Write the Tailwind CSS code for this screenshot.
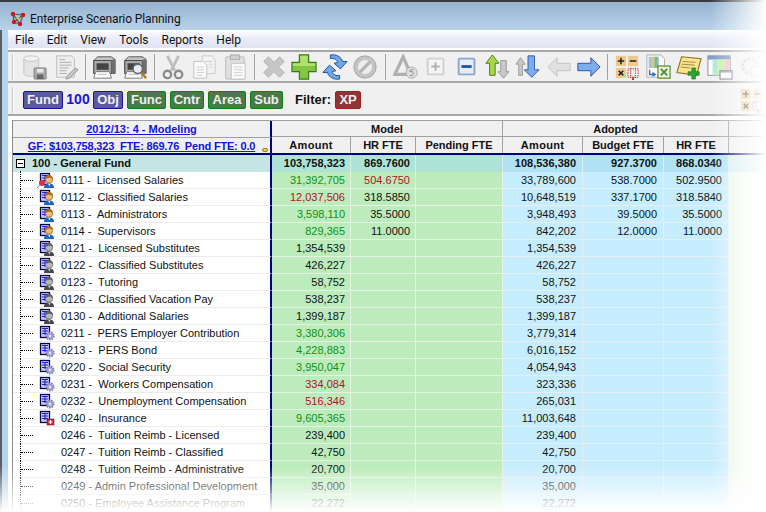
<!DOCTYPE html>
<html lang="en">
<head>
    <meta charset="utf-8"/>
    <title>Enterprise Scenario Planning</title>
    <script src="https://cdn.jsdelivr.net/npm/@tailwindcss/browser@4"></script>
</head>
<body class="bg-white">
<svg class="hidden" width="0" height="0">
    <defs>
        <!-- tree row icons -->
        <symbol id="sheet" viewBox="0 0 16 16">
            <rect x="1.500" y="1.500" width="9" height="11" fill="#c8c8f8" stroke="#08083a" stroke-width="1.300"/>
            <path d="M3 3.500h6M3 6h6M3 8.500h6M6 3v7" stroke="#2020c8" stroke-width="1.100" fill="none"/>
        </symbol>
        <symbol id="person" viewBox="0 0 16 16">
            <use href="#sheet"/>
            <path d="M5 16c0-3.500 2-4.500 5-4.500s5 1 5 4.500z" fill="#1c66c0"/>
            <path d="M9 11.500h2.500l-1 3z" fill="#dff"/>
            <circle cx="10" cy="7.500" r="3.700" fill="#eebb78" stroke="#a06820" stroke-width=".8"/>
            <path d="M6.300 7.500c-.5-3.500 2-4.500 3.700-4.500s4.200 1 3.700 4.500c-1-2-5-2.500-7.400 0z" fill="#a86a18"/>
        </symbol>
        <symbol id="greyperson" viewBox="0 0 16 16">
            <use href="#sheet"/>
            <path d="M5 16c0-3.500 2-4.500 5-4.500s5 1 5 4.500z" fill="#484848"/>
            <path d="M9 11.500h2.500l-1 3z" fill="#ddd"/>
            <circle cx="10" cy="7.500" r="3.700" fill="#b8b8b8" stroke="#686868" stroke-width=".8"/>
            <path d="M6.300 7.500c-.5-3.500 2-4.500 3.700-4.500s4.200 1 3.700 4.500c-1-2-5-2.500-7.400 0z" fill="#606060"/>
        </symbol>
        <symbol id="gears" viewBox="0 0 16 16">
            <use href="#sheet"/>
            <circle cx="11" cy="11" r="3.600" fill="#a8a8d8" stroke="#8080b0" stroke-width="2" stroke-dasharray="1.500 1"/>
            <circle cx="11" cy="11" r="1.200" fill="#e8e8f8"/>
        </symbol>
        <symbol id="medical" viewBox="0 0 16 16">
            <use href="#sheet"/>
            <rect x="8" y="9" width="7" height="6" fill="#c02838" stroke="#801018" stroke-width=".6"/>
            <path d="M9.500 12h4M11.500 10v4" stroke="#fff" stroke-width="1.200"/>
        </symbol>
        <!-- toolbar icons -->
        <symbol id="t-db" viewBox="0 0 28 28">
            <path d="M2 5v16c0 2 4 3 8 3s8-1 8-3V5z" fill="#e4e4e4" stroke="#c4c4c4"/>
            <ellipse cx="10" cy="5" rx="8" ry="3" fill="#f2f2f2" stroke="#c4c4c4"/>
            <rect x="13" y="15" width="13" height="12" rx="1" fill="#a8a8a8" stroke="#808080"/>
            <rect x="16" y="16" width="7" height="4" fill="#e8e8e8"/>
            <rect x="16" y="22" width="7" height="5" fill="#686868"/>
        </symbol>
        <symbol id="t-doc" viewBox="0 0 28 28">
            <path d="M4 2h16l3 3v20H4z" fill="#eee" stroke="#bbb"/>
            <path d="M7 6h6M7 9h13M7 12h13M7 15h10M7 18h8M7 21h8" stroke="#aaa"/>
            <path d="M15 24l9-9 3 2-9 9-4 1z" fill="#c4c4c4" stroke="#999"/>
        </symbol>
        <symbol id="t-print" viewBox="0 0 28 28">
            <path d="M7 3h15l4 3v15H3V7z" fill="#c4c4c4" stroke="#555"/>
            <path d="M3 7h19v14H3z" fill="#a8a8a8" stroke="#444"/>
            <path d="M22 6l4 0v15h-4z" fill="#6e6e6e"/>
            <rect x="6" y="10" width="13" height="7" fill="#444"/>
            <path d="M5 19h15l2 7H3z" fill="#fafafa" stroke="#777"/>
            <path d="M7 22h10" stroke="#bbb"/>
        </symbol>
        <symbol id="t-preview" viewBox="0 0 28 28">
            <use href="#t-print"/>
            <circle cx="17" cy="16" r="5" fill="#e4eef8" stroke="#666" stroke-width="1.500"/>
            <path d="M21 20l5 6" stroke="#b07820" stroke-width="2.500"/>
        </symbol>
        <symbol id="t-scissors" viewBox="0 0 28 28">
            <path d="M8 2l8 16M20 2l-8 16" stroke="#bdbdbd" stroke-width="3"/>
            <circle cx="8" cy="22" r="4" fill="#f0f0f0" stroke="#8c8c8c" stroke-width="2.500"/>
            <circle cx="20" cy="22" r="4" fill="#f0f0f0" stroke="#8c8c8c" stroke-width="2.500"/>
        </symbol>
        <symbol id="t-copy" viewBox="0 0 28 28">
            <path d="M12 2h10l4 4v15H12z" fill="#f2f2f2" stroke="#c8c8c8"/>
            <path d="M3 8h10l4 4v14H3z" fill="#fafafa" stroke="#c0c0c0"/>
            <path d="M6 14h8M6 17h8M6 20h8M6 23h6M15 8h8M19 11h4M20 14h3" stroke="#ccc"/>
        </symbol>
        <symbol id="t-paste" viewBox="0 0 28 28">
            <rect x="4" y="3" width="20" height="24" rx="1" fill="#e0e0e0" stroke="#bbb"/>
            <rect x="9" y="1" width="10" height="5" fill="#d0d0d0" stroke="#aaa"/>
            <path d="M10 10h15v17H10z" fill="#fafafa" stroke="#c0c0c0"/>
            <path d="M13 14h9M13 17h9M13 20h9M13 23h9" stroke="#ccc"/>
        </symbol>
        <symbol id="t-x" viewBox="0 0 28 28">
            <path d="M3 8l5-5 6 6 6-6 5 5-6 6 6 6-5 5-6-6-6 6-5-5 6-6z" fill="#c6c6c6" stroke="#b0b0b0" stroke-linejoin="round"/>
        </symbol>
        <symbol id="t-plus" viewBox="0 0 28 28">
            <path d="M9 1h10v8h8v10h-8v8H9v-8H1V9h8z" fill="#86c440" stroke="#2f7a14" stroke-width="1.200"/>
            <path d="M10 2h8v8h8v3H2v-3h8z" fill="#b4e070"/>
        </symbol>
        <symbol id="t-refresh" viewBox="0 0 28 28">
            <g id="half-arrow">
                <path d="M9 1C15 0 21 3 22 8l5 0-7 8-7-6 4-1C16 6 13 4 9 5z" fill="#6fa8e8" stroke="#1c4c98" stroke-linejoin="round"/>
            </g>
            <use href="#half-arrow" transform="rotate(180 14 14)"/>
        </symbol>
        <symbol id="t-no" viewBox="0 0 28 28">
            <circle cx="14" cy="14" r="12" fill="#c4c4c4" stroke="#a4a4a4"/>
            <circle cx="14" cy="14" r="7.500" fill="#eee"/>
            <path d="M8.500 19.500l11-11" stroke="#b4b4b4" stroke-width="3.500"/>
        </symbol>
        <symbol id="t-tri" viewBox="0 0 28 28">
            <path d="M11 3L2 22h17z" fill="none" stroke="#b0b0b0" stroke-width="3.500"/>
            <circle cx="20" cy="20" r="6" fill="#e0e0e0" stroke="#aaa"/>
            <path d="M22 17h-3l-1 2h3l1 2-1 2h-3" fill="none" stroke="#888"/>
        </symbol>
        <symbol id="t-plusbox" viewBox="0 0 28 28">
            <rect x="5" y="5" width="17" height="17" rx="1" fill="#f4f4f4" stroke="#d0d0d0" stroke-width="2"/>
            <path d="M9 13.500h9M13.500 9v9" stroke="#b0b0b0" stroke-width="2"/>
        </symbol>
        <symbol id="t-minusbox" viewBox="0 0 28 28">
            <rect x="5" y="5" width="17" height="17" rx="1" fill="#e4ecf8" stroke="#8ca4cc" stroke-width="2"/>
            <path d="M8 13.500h11" stroke="#2050a0" stroke-width="3"/>
        </symbol>
        <symbol id="t-updown" viewBox="0 0 28 28">
            <path d="M9 1l7 9h-4v13H6V10H2z" fill="#a8d848" stroke="#4a7a10"/>
            <path d="M18 7h6v12h3l-6 7-6-7h3z" fill="#c8c8c8" stroke="#999"/>
        </symbol>
        <symbol id="t-downup" viewBox="0 0 28 28">
            <path d="M6 4l5 7h-3v12H4V11H1z" fill="#c8c8c8" stroke="#999"/>
            <path d="M14 2h7v15h5l-8 8-8-8h4z" fill="#7cacec" stroke="#2c5cb0"/>
        </symbol>
        <symbol id="t-left" viewBox="0 0 28 28">
            <path d="M2 14l10-10v6h14v8H12v6z" fill="#e0e0e0" stroke="#c0c0c0"/>
        </symbol>
        <symbol id="t-right" viewBox="0 0 28 28">
            <path d="M26 14L16 4v6H2v8h14v6z" fill="#7cacec" stroke="#2c4ca0"/>
        </symbol>
        <symbol id="t-calc" viewBox="0 0 28 28">
            <rect x="2" y="2" width="11" height="11" fill="#ecc98c"/>
            <rect x="15" y="2" width="11" height="11" fill="#ecc98c"/>
            <rect x="2" y="15" width="11" height="11" fill="#ecc98c"/>
            <path d="M4 7.500h7M7.500 4v7M17 7.500h7M5 18l5 5M10 18l-5 5" stroke="#222" stroke-width="1.600"/>
            <path d="M15 16h11v9h-11zM18 15v11M23 15v11" fill="none" stroke="#d02020" stroke-dasharray="1.500 1"/>
            <path d="M20.500 25v3" stroke="#d02020" stroke-width="2"/>
        </symbol>
        <symbol id="t-excel" viewBox="0 0 28 28">
            <path d="M2 1h15l4 4v20H2z" fill="#fafafa" stroke="#aaa"/>
            <path d="M4 3h11v12H4z" fill="#9cc4e8"/>
            <path d="M8 3v12" stroke="#e8c860" stroke-width="3"/>
            <path d="M12 3v12" stroke="#88b868" stroke-width="3"/>
            <path d="M5 17v5h6M8 20l3 2-3 2" stroke="#3070c0" fill="none" stroke-width="1.500"/>
            <rect x="14" y="13" width="13" height="13" fill="#f0f6e8" stroke="#6c9440" stroke-width="1.500"/>
            <path d="M17 16l7 7M24 16l-7 7" stroke="#4c8a2c" stroke-width="2"/>
        </symbol>
        <symbol id="t-note" viewBox="0 0 28 28">
            <path d="M6 3l21 2-5 18L1 20z" fill="#f8e490" stroke="#8c7420" stroke-width="1.200"/>
            <path d="M7 8l14 1M6 11l14 1M5 14l10 1" stroke="#99883c"/>
            <path d="M17 15h4v4h4v4h-4v4h-4v-4h-4v-4h4z" fill="#30a030" stroke="#186818" stroke-width=".6"/>
        </symbol>
        <symbol id="t-table" viewBox="0 0 28 28">
            <rect x="1" y="2" width="24" height="21" fill="#fff" stroke="#8a8a8a"/>
            <rect x="1" y="2" width="24" height="4" fill="#7c9cc4"/>
            <rect x="6" y="6" width="6" height="17" fill="#b0e8d8"/>
            <rect x="12" y="6" width="7" height="17" fill="#c8f0a8"/>
            <rect x="19" y="6" width="6" height="17" fill="#f4c0c8"/>
            <rect x="14" y="18" width="13" height="9" fill="#f8f8f8" stroke="#667"/>
            <rect x="14" y="18" width="13" height="2" fill="#9ab"/>
        </symbol>
        <symbol id="t-gear" viewBox="0 0 28 28">
            <circle cx="13" cy="13" r="8" fill="none" stroke="#c8c8c8" stroke-width="3" stroke-dasharray="3 2"/>
            <rect x="14" y="14" width="12" height="10" fill="#f4f4f4" stroke="#ccc"/>
        </symbol>
    </defs>
</svg>

<div class="relative w-[766px] h-[512px] overflow-hidden font-['Liberation_Sans',sans-serif] text-[11px] text-[#111]">
    <!-- title bar -->
    <div class="h-[30px] border-t-2 border-[#3a3a3a] bg-gradient-to-b from-[#97b3d0] to-[#b8d2ea] flex items-center pl-[10px] pt-[5px] gap-[4px] font-['Roboto',sans-serif] text-[12px] tracking-[-0.1px] text-[#111]">
        <svg width="16" height="16" viewBox="0 0 16 16">
            <path d="M3 3l10 1-3 9-6-2zM3 3l7 10M13 4l-9 7" fill="none" stroke="#555" stroke-width="1.200"/>
            <circle cx="3" cy="3" r="2.200" fill="#d01818"/>
            <circle cx="13" cy="4" r="2.200" fill="#d01818"/>
            <circle cx="10" cy="13" r="2.200" fill="#d01818"/>
            <circle cx="4" cy="11" r="2.200" fill="#d01818"/>
            <circle cx="8" cy="7" r="1.500" fill="#e8c020"/>
        </svg>
        <span>Enterprise Scenario Planning</span>
    </div>

    <div class="flex h-[482px]">
        <!-- window frame, left -->
        <div class="w-[8px] shrink-0 bg-[#b9d3ea] border-l-2 border-[#55606c]"></div>

        <div class="flex-1 flex flex-col min-w-0">
            <!-- menu -->
            <div class="h-[18px] pt-[1px] bg-gradient-to-b from-[#ffffff] via-[#e9ebf7] to-[#e0e3f2] flex items-center gap-[13px] pl-[7px] font-['Roboto',sans-serif] text-[12px] text-[#111]">
                <span>File</span><span>Edit</span><span>View</span><span>Tools</span><span>Reports</span><span>Help</span>
            </div>

            <!-- main toolbar -->
            <div class="h-[33px] mt-[2px] bg-[#f0f0f0] border-t-2 border-b-2 border-[#a8a8a8] flex items-center pl-[4px]">
                <div class="w-[2px] h-[26px] bg-[#c8c8c8] border-r border-white mr-[6px]"></div>
                <button class="w-[31px] h-[28px] flex items-center justify-center"><svg width="26" height="26"><use href="#t-db"/></svg></button>
                <button class="w-[31px] h-[28px] flex items-center justify-center"><svg width="26" height="26"><use href="#t-doc"/></svg></button>
                <div class="w-[8px] flex justify-center"><div class="w-px h-[26px] bg-[#a0a0a0]"></div></div>
                <button class="w-[31px] h-[28px] flex items-center justify-center"><svg width="26" height="26"><use href="#t-print"/></svg></button>
                <button class="w-[31px] h-[28px] flex items-center justify-center"><svg width="26" height="26"><use href="#t-preview"/></svg></button>
                <div class="w-[8px] flex justify-center"><div class="w-px h-[26px] bg-[#a0a0a0]"></div></div>
                <button class="w-[31px] h-[28px] flex items-center justify-center"><svg width="26" height="26"><use href="#t-scissors"/></svg></button>
                <button class="w-[31px] h-[28px] flex items-center justify-center"><svg width="26" height="26"><use href="#t-copy"/></svg></button>
                <button class="w-[32px] h-[28px] flex items-center justify-center"><svg width="26" height="26"><use href="#t-paste"/></svg></button>
                <div class="w-[8px] flex justify-center"><div class="w-px h-[26px] bg-[#a0a0a0]"></div></div>
                <button class="w-[31px] h-[28px] flex items-center justify-center"><svg width="26" height="26"><use href="#t-x"/></svg></button>
                <button class="w-[31px] h-[28px] flex items-center justify-center"><svg width="26" height="26"><use href="#t-plus"/></svg></button>
                <button class="w-[31px] h-[28px] flex items-center justify-center"><svg width="26" height="26"><use href="#t-refresh"/></svg></button>
                <button class="w-[31px] h-[28px] flex items-center justify-center"><svg width="26" height="26"><use href="#t-no"/></svg></button>
                <div class="w-[10px] flex justify-center"><div class="w-px h-[26px] bg-[#a0a0a0]"></div></div>
                <button class="w-[31px] h-[28px] flex items-center justify-center"><svg width="26" height="26"><use href="#t-tri"/></svg></button>
                <button class="w-[31px] h-[28px] flex items-center justify-center"><svg width="26" height="26"><use href="#t-plusbox"/></svg></button>
                <button class="w-[31px] h-[28px] flex items-center justify-center"><svg width="26" height="26"><use href="#t-minusbox"/></svg></button>
                <button class="w-[31px] h-[28px] flex items-center justify-center"><svg width="26" height="26"><use href="#t-updown"/></svg></button>
                <button class="w-[31px] h-[28px] flex items-center justify-center"><svg width="26" height="26"><use href="#t-downup"/></svg></button>
                <button class="w-[31px] h-[28px] flex items-center justify-center"><svg width="26" height="26"><use href="#t-left"/></svg></button>
                <button class="w-[31px] h-[28px] flex items-center justify-center"><svg width="26" height="26"><use href="#t-right"/></svg></button>
                <div class="w-[7px] flex justify-center"><div class="w-px h-[26px] bg-[#a0a0a0]"></div></div>
                <button class="w-[31px] h-[28px] flex items-center justify-center"><svg width="26" height="26"><use href="#t-calc"/></svg></button>
                <button class="w-[32px] h-[28px] flex items-center justify-center"><svg width="26" height="26"><use href="#t-excel"/></svg></button>
                <button class="w-[32px] h-[28px] flex items-center justify-center"><svg width="26" height="26"><use href="#t-note"/></svg></button>
                <button class="w-[31px] h-[28px] flex items-center justify-center"><svg width="26" height="26"><use href="#t-table"/></svg></button>
                <button class="w-[31px] h-[28px] flex items-center justify-center"><svg width="26" height="26"><use href="#t-gear"/></svg></button>
            </div>

            <!-- filter bar -->
            <div class="h-[33px] pt-[2px] bg-[#f0f0f0] border-b-2 border-[#a8a8a8] flex items-center pl-[4px] text-[13px] font-bold">
                <div class="w-[2px] h-[26px] bg-[#c8c8c8] border-r border-white mr-[9px]"></div>
                <span class="w-[40px] h-[18px] flex items-center justify-center bg-[#5a5a9c] border border-[#1414a0] rounded-[2px] text-[#eee]">Fund</span>
                <span class="w-[30px] text-center text-[14px] text-[#1a10e0]">100</span>
                <span class="w-[30px] h-[18px] flex items-center justify-center bg-[#5a5a9c] border border-[#1414a0] rounded-[2px] text-[#eee]">Obj</span>
                <span class="ml-[4px] w-[39px] h-[18px] flex items-center justify-center bg-[#4a7a4a] border border-[#0c800c] rounded-[2px] text-[#eee]">Func</span>
                <span class="ml-[4px] w-[34px] h-[18px] flex items-center justify-center bg-[#4a7a4a] border border-[#0c800c] rounded-[2px] text-[#eee]">Cntr</span>
                <span class="ml-[4px] w-[38px] h-[18px] flex items-center justify-center bg-[#4a7a4a] border border-[#0c800c] rounded-[2px] text-[#eee]">Area</span>
                <span class="ml-[4px] w-[33px] h-[18px] flex items-center justify-center bg-[#4a7a4a] border border-[#0c800c] rounded-[2px] text-[#eee]">Sub</span>
                <span class="ml-[12px] text-[#111]">Filter:</span>
                <span class="ml-[4px] w-[26px] h-[18px] flex items-center justify-center bg-[#8c3636] border border-[#a81c1c] rounded-[2px] text-[#eee]">XP</span>
                <svg class="ml-auto mr-[1px]" width="26" height="26"><use href="#t-calc"/></svg>
            </div>

            <!-- grid -->
            <div class="mt-[4px] ml-[4px] flex-1 bg-[#f4f4f4] border-l border-[#8a8a8a] overflow-hidden">
                <div class="flex h-[17px] border-t border-[#a0a0a0] bg-[#f0f0f0]">
                    <div class="w-[259px] shrink-0 border-r-2 border-[#000080] flex items-center justify-center font-bold text-[#1414e0] underline">2012/13: 4 - Modeling</div>
                    <div class="w-[231px] shrink-0 pt-[1px] border-r border-b border-[#a0a0a0] flex items-center justify-center font-bold">Model</div>
                    <div class="w-[226px] shrink-0 pt-[1px] border-r border-b border-[#a0a0a0] flex items-center justify-center font-bold">Adopted</div>
                    <div class="flex-1 border-b border-[#a0a0a0]"></div>
                </div>
                <div class="flex h-[18px] bg-[#f0f0f0] border-b-2 border-[#000080]">
                    <div class="relative w-[259px] shrink-0 pt-[1px] border-r-2 border-t border-[#a0a0a0] border-r-[#000080] flex items-center justify-center font-bold text-[#1414e0]">
                        <span class="underline whitespace-pre tracking-[-0.18px]">GF: $103,758,323  FTE: 869.76  Pend FTE: 0.0</span>
                        <span class="absolute right-[2px] bottom-[1px] w-[6px] h-[4px] rounded-[2px] bg-[#e8d840] border border-[#908020]"></span>
                    </div>
                    <div class="w-[79px] shrink-0 pt-[1px] border-r border-[#a0a0a0] flex items-center justify-center font-bold tracking-[0.3px]">Amount</div>
                    <div class="w-[65px] shrink-0 pt-[1px] border-r border-[#a0a0a0] flex items-center justify-center font-bold">HR FTE</div>
                    <div class="w-[87px] shrink-0 pt-[1px] border-r border-[#a0a0a0] flex items-center justify-center font-bold">Pending FTE</div>
                    <div class="w-[80px] shrink-0 pt-[1px] border-r border-[#a0a0a0] flex items-center justify-center font-bold tracking-[0.3px]">Amount</div>
                    <div class="w-[81px] shrink-0 pt-[1px] border-r border-[#a0a0a0] flex items-center justify-center font-bold">Budget FTE</div>
                    <div class="w-[65px] shrink-0 pt-[1px] border-r border-[#a0a0a0] flex items-center justify-center font-bold">HR FTE</div>
                    <div class="flex-1"></div>
                </div>
                <!-- general fund -->
                <div class="flex h-[17px] font-bold">
                    <div class="relative w-[259px] shrink-0 border-r-2 border-[#000080] bg-[#c4e5e3] flex items-center pl-[19px]">
                        <span class="absolute left-[3px] top-[4px] w-[9px] h-[9px] bg-white border border-black flex items-center justify-center"><span class="w-[5px] h-px bg-black"></span></span>
                        100 - General Fund
                    </div>
                    <div class="w-[79px] shrink-0 bg-[#aee4d8] border-r border-[#d8eeea] flex items-center justify-end pr-[5px]">103,758,323</div>
                    <div class="w-[65px] shrink-0 bg-[#aee4d8] border-r border-[#d8eeea] flex items-center justify-end pr-[5px]">869.7600</div>
                    <div class="w-[87px] shrink-0 bg-[#aee4d8] border-r border-[#d8eeea]"></div>
                    <div class="w-[80px] shrink-0 bg-[#b0e2f4] border-r border-[#d8eef6] flex items-center justify-end pr-[6px]">108,536,380</div>
                    <div class="w-[81px] shrink-0 bg-[#b0e2f4] border-r border-[#d8eef6] flex items-center justify-end pr-[6px]">927.3700</div>
                    <div class="w-[65px] shrink-0 bg-[#b0e2f4] border-r border-[#d8eef6] flex items-center justify-end pr-[6px]">868.0340</div>
                    <div class="flex-1 bg-[#d4ecec]"></div>
                </div>
                <div id="rows"></div>
            </div>
        </div>
    </div>

    <!-- the screenshot fades out on the right and the bottom -->
    <div class="absolute top-0 right-0 w-[56px] h-full bg-gradient-to-r from-white/0 to-white pointer-events-none"></div>
    <div class="absolute left-0 bottom-0 w-full h-[46px] bg-gradient-to-b from-white/0 to-white pointer-events-none"></div>
</div>

<script>
    var G = 'text-[#109010]', R = 'text-[#b01028]', K = '';
    var rows = [
        ['person', '0111 -  Licensed Salaries', '31,392,705', G, '504.6750', R, '33,789,600', '538.7000', '502.9500'],
        ['person', '0112 -  Classified Salaries', '12,037,506', R, '318.5850', K, '10,648,519', '337.1700', '318.5840'],
        ['person', '0113 -  Administrators', '3,598,110', G, '35.5000', K, '3,948,493', '39.5000', '35.5000'],
        ['person', '0114 -  Supervisors', '829,365', G, '11.0000', K, '842,202', '12.0000', '11.0000'],
        ['greyperson', '0121 -  Licensed Substitutes', '1,354,539', K, '', K, '1,354,539', '', ''],
        ['greyperson', '0122 -  Classified Substitutes', '426,227', K, '', K, '426,227', '', ''],
        ['greyperson', '0123 -  Tutoring', '58,752', K, '', K, '58,752', '', ''],
        ['greyperson', '0126 -  Classified Vacation Pay', '538,237', K, '', K, '538,237', '', ''],
        ['greyperson', '0130 -  Additional Salaries', '1,399,187', K, '', K, '1,399,187', '', ''],
        ['gears', '0211 -  PERS Employer Contribution', '3,380,306', G, '', K, '3,779,314', '', ''],
        ['gears', '0213 -  PERS Bond', '4,228,883', G, '', K, '6,016,152', '', ''],
        ['gears', '0220 -  Social Security', '3,950,047', G, '', K, '4,054,943', '', ''],
        ['gears', '0231 -  Workers Compensation', '334,084', R, '', K, '323,336', '', ''],
        ['gears', '0232 -  Unemployment Compensation', '516,346', R, '', K, '265,031', '', ''],
        ['medical', '0240 -  Insurance', '9,605,365', G, '', K, '11,003,648', '', ''],
        ['', '0246 -  Tuition Reimb - Licensed', '239,400', K, '', K, '239,400', '', ''],
        ['', '0247 -  Tuition Reimb - Classified', '42,750', K, '', K, '42,750', '', ''],
        ['', '0248 -  Tuition Reimb - Administrative', '20,700', K, '', K, '20,700', '', ''],
        ['', '0249 - Admin Professional Development', '35,000', K, '', K, '35,000', '', ''],
        ['', '0250 - Employee Assistance Program', '22,272', K, '', K, '22,272', '', '']
    ];
    var html = '';
    rows.forEach(function (r, i) {
        var icon = r[0] ? '<svg class="absolute left-[26px] top-0" width="16" height="16"><use href="#' + r[0] + '"/></svg>' : '';
        var pin = i == 0 ? '<svg class="absolute left-[23px] top-[7px]" width="10" height="10" viewBox="0 0 10 10"><path d="M1 9l4-4" stroke="#888"/><circle cx="6" cy="4" r="3" fill="#d83048"/></svg>' : '';
        html += '<div class="flex h-[17px]">'
            + '<div class="relative w-[259px] shrink-0 bg-white border-r-2 border-r-[#000080] border-b border-b-[#ececec] flex items-center pl-[48px] whitespace-pre">'
            + '<span class="absolute left-[7px] top-[-1px] h-[18px] border-l border-dotted border-black"></span>'
            + '<span class="absolute left-[8px] top-[8px] w-[12px] border-t border-dotted border-black"></span>'
            + icon + pin + r[1] + '</div>'
            + '<div class="w-[79px] shrink-0 bg-[#bdecbc] border-r border-b border-[#e6f2e4] flex items-center justify-end pr-[5px] ' + r[3] + '">' + r[2] + '</div>'
            + '<div class="w-[65px] shrink-0 bg-[#bdecbc] border-r border-b border-[#e6f2e4] flex items-center justify-end pr-[5px] ' + r[5] + '">' + r[4] + '</div>'
            + '<div class="w-[87px] shrink-0 bg-[#bdecbc] border-r border-b border-[#e6f2e4]"></div>'
            + '<div class="w-[80px] shrink-0 bg-[#c6edfe] border-r border-b border-[#e6eef2] flex items-center justify-end pr-[6px]">' + r[6] + '</div>'
            + '<div class="w-[81px] shrink-0 bg-[#c6edfe] border-r border-b border-[#e6eef2] flex items-center justify-end pr-[6px]">' + r[7] + '</div>'
            + '<div class="w-[65px] shrink-0 bg-[#c6edfe] border-r border-b border-[#e6eef2] flex items-center justify-end pr-[6px]">' + r[8] + '</div>'
            + '<div class="flex-1 bg-gradient-to-r from-[#e8f8e4] to-white"></div>'
            + '</div>';
    });
    document.getElementById('rows').innerHTML = html;
</script>
</body>
</html>
